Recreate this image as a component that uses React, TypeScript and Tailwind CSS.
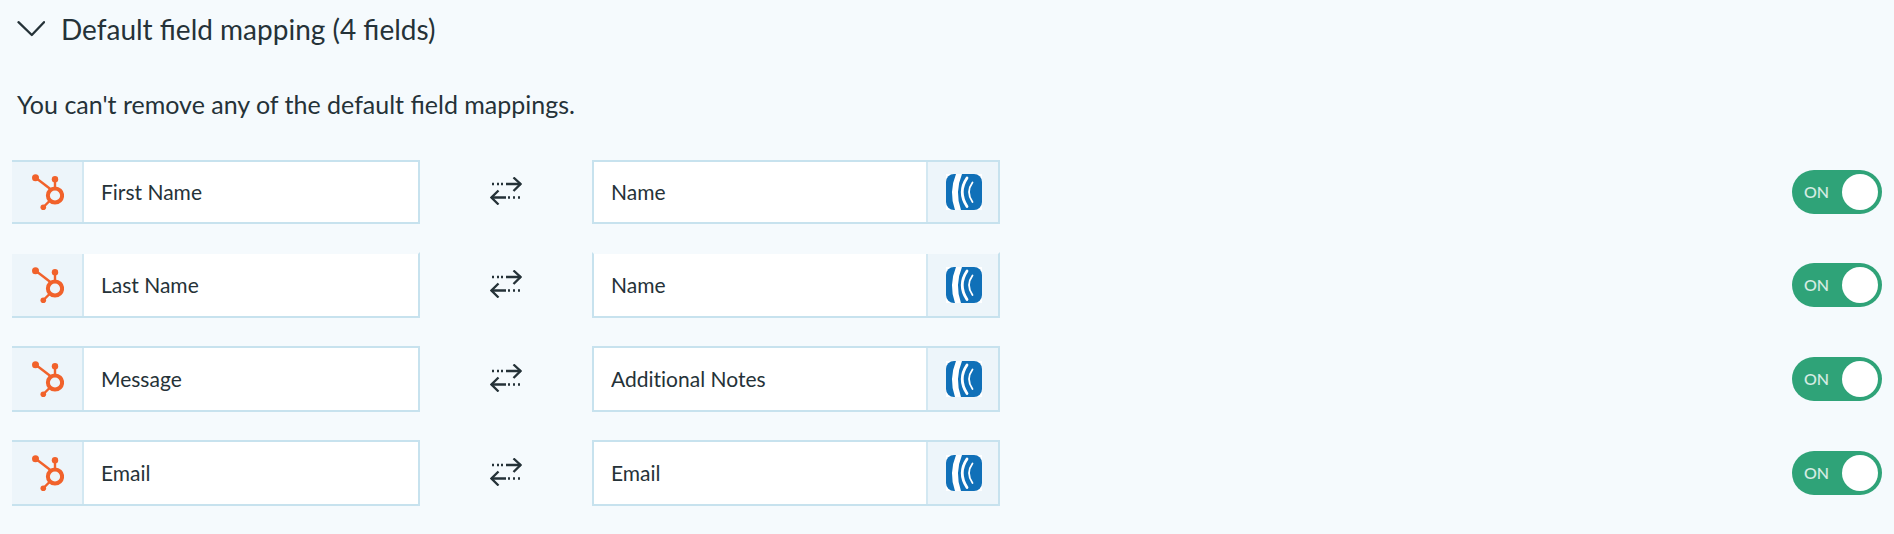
import { useState } from "react";
import { clsx } from "clsx";

interface Mapping {
    id: string;
    source: string;
    target: string;
}

const mappings: Mapping[] = [
    { id: "first-name", source: "First Name", target: "Name" },
    { id: "last-name", source: "Last Name", target: "Name" },
    { id: "message", source: "Message", target: "Additional Notes" },
    { id: "email", source: "Email", target: "Email" },
];

function ChevronIcon({ open }: { open: boolean }) {
    return (
        <svg
            className={clsx("h-4 w-7 shrink-0", !open && "-rotate-90")}
            viewBox="0 0 28 16"
            fill="none"
            stroke="currentColor"
            strokeWidth="2.300"
            strokeLinecap="round"
            strokeLinejoin="round"
            aria-hidden="true"
        >
            <path d="M1.500 1.200l13.300 12.800L27 1.200" />
        </svg>
    );
}

function HubSpotIcon() {
    return (
        <svg className="h-9 w-8" viewBox="0 0 32 36" aria-hidden="true">
            <g stroke="#f1622b" strokeWidth="2.400" fill="none">
                <path d="M4 4l15 11.500" />
                <path d="M23 6v8" />
                <path d="M11.500 33l7-7" />
                <circle cx="23" cy="21.500" r="7.100" strokeWidth="4" />
            </g>
            <g fill="#f1622b">
                <circle cx="3.500" cy="3.800" r="3.500" />
                <circle cx="23" cy="5.300" r="3.200" />
                <circle cx="11.300" cy="33.200" r="2.800" />
            </g>
        </svg>
    );
}

function AWeberIcon() {
    return (
        <svg className="size-9" viewBox="0 0 36 36" fill="none" aria-hidden="true">
            <rect width="36" height="36" fill="#fff" />
            <rect width="36" height="36" rx="8" fill="#1070b8" />
            <path d="M10 0Q2.500 18 9 36h6Q8.500 18 16 0z" fill="#fff" />
            <path
                d="M21 4Q11.500 18 21 32.500"
                stroke="#fff"
                strokeWidth="2.800"
                strokeLinecap="round"
            />
            <path
                d="M26.500 8.500Q19.500 18 26.500 28"
                stroke="#fff"
                strokeWidth="1.800"
                strokeLinecap="round"
            />
        </svg>
    );
}

function SyncIcon() {
    return (
        <svg
            className="h-7 w-8"
            viewBox="0 0 32 28"
            fill="none"
            stroke="currentColor"
            strokeWidth="2.300"
            role="img"
            aria-label="Two-way sync"
        >
            <path d="M2 7h2M7 7h2M11 7h2M16 7h15" />
            <path d="M23.500 0.500l7 6.500-7 7" />
            <path d="M30 20.500h-2M25 20.500h-2M20 20.500h-2M16 20.500H1" />
            <path d="M8.500 13.500l-7 7 7 7" />
        </svg>
    );
}

function Toggle({ label }: { label: string }) {
    const [checked, setChecked] = useState(true);

    return (
        <label
            className={clsx(
                "flex h-11 w-[90px] shrink-0 cursor-pointer items-center justify-between rounded-full pr-1 pl-3 text-base font-medium text-white/80 has-focus-visible:outline-2",
                checked ? "bg-[#2fa378]" : "flex-row-reverse bg-slate-400"
            )}
        >
            <input
                className="sr-only"
                type="checkbox"
                role="switch"
                aria-label={label}
                checked={checked}
                onChange={(e) => setChecked(e.target.checked)}
            />
            <span>{checked ? "ON" : "OFF"}</span>
            <span className="size-9 rounded-full bg-white" />
        </label>
    );
}

function MappingRow({ mapping }: { mapping: Mapping }) {
    const { id, source, target } = mapping;

    return (
        <li className="group flex h-[66px] items-center first:h-16">
            <div className="flex h-full w-[408px] border-2 border-l-0 border-[#c7e2ee] bg-white bg-clip-padding group-nth-2:border-t-transparent">
                <div className="flex w-18 shrink-0 items-center justify-center border-r-2 border-[#d3e8f2] bg-[#edf5fa] bg-clip-padding pl-0.5">
                    <HubSpotIcon />
                </div>
                <input
                    className="w-full min-w-0 px-[17px] outline-none [font-variant-ligatures:none]"
                    id={`${id}-source`}
                    aria-label={`HubSpot field ${source}`}
                    value={source}
                    readOnly
                />
            </div>
            <div className="flex w-[172px] justify-center pb-0.5">
                <SyncIcon />
            </div>
            <div className="flex h-full w-[408px] border-2 border-[#c7e2ee] bg-white bg-clip-padding group-nth-2:border-t-transparent">
                <input
                    className="w-full min-w-0 px-[17px] outline-none [font-variant-ligatures:none]"
                    id={`${id}-target`}
                    aria-label={`AWeber field ${target}`}
                    value={target}
                    readOnly
                />
                <div className="flex w-18 shrink-0 items-center justify-center border-l-2 border-[#d3e8f2] bg-[#edf5fa] bg-clip-padding pl-0.5">
                    <AWeberIcon />
                </div>
            </div>
            <div className="ml-auto">
                <Toggle label={`Sync ${source}`} />
            </div>
        </li>
    );
}

export default function App() {
    const [open, setOpen] = useState(true);

    return (
        <main className="min-h-screen bg-[#f5fafd] px-3 py-2 font-['Lato',sans-serif] text-[21px] text-[#253238]">
            <h2 className="text-[28px] leading-[42px]">
                <button
                    className="flex cursor-pointer items-center gap-4 px-[5px]"
                    type="button"
                    aria-expanded={open}
                    onClick={() => setOpen(!open)}
                >
                    <ChevronIcon open={open} />
                    Default field mapping (4 fields)
                </button>
            </h2>
            {open && (
                <>
                    <p className="mt-[34px] px-[5px] text-[25px] leading-10">
                        You can't remove any of the default field mappings.
                    </p>
                    <ul className="mt-9 flex flex-col gap-7">
                        {mappings.map((mapping) => (
                            <MappingRow key={mapping.id} mapping={mapping} />
                        ))}
                    </ul>
                </>
            )}
        </main>
    );
}
